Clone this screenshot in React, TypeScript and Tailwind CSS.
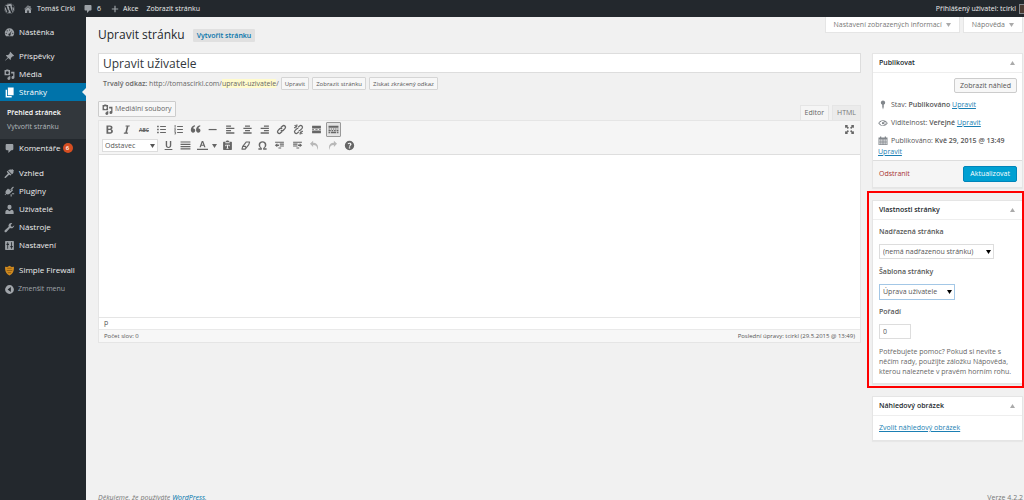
import type { ReactNode } from 'react'
import { FaWordpress } from 'react-icons/fa'

interface IconProps {
  className?: string
  children?: ReactNode
}

// All glyphs are drawn on a 20x20 grid
function Icon({ className = 'size-[11px]', children }: IconProps) {
  return (
    <svg viewBox="0 0 20 20" fill="currentColor" aria-hidden="true" className={`shrink-0 ${className}`}>
      {children}
    </svg>
  )
}

const glyphs = {
  home: <path d="M16 8.5l1.5 1.5-1 1L10 4.6 3.500 11l-1-1L10 2.500l3 3V4h2v3.500zM10 6l6 5.500V18h-4.500v-5h-3v5H4v-6.500z" />,
  comment: <path d="M5 2h10c1.100 0 2 .9 2 2v7c0 1.100-.9 2-2 2h-2l-5 5v-5H5c-1.100 0-2-.9-2-2V4c0-1.100.9-2 2-2z" />,
  plus: <path d="M8.500 2h3v6.500H18v3h-6.500V18h-3v-6.500H2v-3h6.500z" />,
  dashboard: (
    <path
      fillRule="evenodd"
      d="M3.800 17h12.400A8.600 8.600 0 1 0 3.800 17zM10 4.500a1 1 0 1 1 0 2 1 1 0 0 1 0-2zM5.800 6a1 1 0 1 1 0 2 1 1 0 0 1 0-2zM14.500 6.500l-2.800 6.400a2 2 0 1 1-1.500-.9zM4 10.500a1 1 0 1 1 0 2 1 1 0 0 1 0-2zM16 10.500a1 1 0 1 1 0 2 1 1 0 0 1 0-2z"
    />
  ),
  post: <path d="M10.400 3l1-1.500L18.500 8.600 17 9.600l-1.200-.2-3.300 3.300c.3 1.500.1 2.900-.8 3.800L8 12.900 2.600 17.400c-.6.5-1 .3-.5-.4L6.900 11.800 3.400 8.300c.9-.9 2.300-1.100 3.800-.8l3.300-3.300z" />,
  media: (
    <path
      fillRule="evenodd"
      d="M1 2h2.500l1-1h3l1 1H11v9.500H1zM6 4a2.700 2.700 0 1 0 0 5.400A2.700 2.700 0 0 0 6 4zM13 5h6v10.500a2.700 2.700 0 1 1-2.300-2.600V8H13zM8.500 13h3v4a2.700 2.700 0 1 1-3-2.500z"
    />
  ),
  page: <path d="M7 1h10.500v14H7zM3 5h2.500v11.500H14V19H3z" />,
  appearance: <path d="M14.500 11.500L7.300 4.200c2-1.200 4-2.200 6.200-1.200l1.300-1.300 3.500 3.500L17 6.500c.9 2-.5 3.500-2.500 5zM6.500 5.200l7 7-1.500 1.500-2.700-1.600L3 18c-1 .9-2.700-.8-1.800-1.800l6-6.200L5 6.700z" />,
  plugin: <path d="M13 4.200l3.100-2.800c1-.8 2.300.5 1.500 1.500L14.800 6l1.700 1.700-6.800 6.800c-1.900 1.200-4 .9-5.300 0L2 17l-.9-.9 2.400-2.400c-1-1.500-1.100-3.500 0-5.200l3.800-3.800 2.300 2.300 1.500-1.500 1.200 1.200-1.500 1.500 1 1 1.500-1.500zM14.500 13h4v2h-4zM12 15h2v4h-2z" />,
  users: <path d="M10 1.500a3.800 3.800 0 0 1 3.700 4c0 2.500-1.500 4.500-3.700 4.500S6.300 8 6.300 5.500a3.800 3.800 0 0 1 3.700-4zM6.500 10.500L10 13l3.500-2.500c2.800.3 4 2 4 4V18h-15v-3.500c0-2 1.200-3.700 4-4z" />,
  tools: <path d="M16.700 9.800a5 5 0 0 1-5.800 1.200L4.500 18c-1 1-2.500.9-3.200 0-.7-.8-.6-2 .2-2.800l7-6.400a5 5 0 0 1 6.600-6.500l-2.900 3 .6 2.900 2.900.6 3-3a5 5 0 0 1-2 4z" />,
  settings: (
    <path
      fillRule="evenodd"
      d="M3 2h14a1 1 0 0 1 1 1v14a1 1 0 0 1-1 1H3a1 1 0 0 1-1-1V3a1 1 0 0 1 1-1zM6 4v3H4.500v2H6v7h1.500V9H9V7H7.500V4zM13 4v7h-1.500v2H13v3h1.500v-3H16v-2h-1.500V4z"
    />
  ),
  collapse: <path fillRule="evenodd" d="M10 2a8 8 0 1 0 0 16 8 8 0 0 0 0-16zM12.500 5.500v9L6.500 10z" />,
  pin: <path d="M10 1a4.500 4.500 0 0 1 1.500 8.700V14L10 19l-1.500-5V9.700A4.500 4.500 0 0 1 10 1z" />,
  eye: (
    <path
      fillRule="evenodd"
      d="M10 4.500c4.200 0 7.500 2.300 9.500 5.800-2 3.200-5.300 5.200-9.500 5.200S2.500 13.500.5 10.300C2.500 6.800 5.800 4.500 10 4.500zM10 6a4.300 4.300 0 1 0 0 8.500A4.300 4.300 0 0 0 10 6zM2.500 10.200c.7 1 2 2.200 3.200 2.900-.8-2-.8-3.800.2-5.500-1.300.6-2.500 1.600-3.400 2.600zM17.500 10.200c-.7 1-2 2.200-3.200 2.900.8-2 .8-3.800-.2-5.500 1.300.6 2.500 1.600 3.400 2.600zM10 8a2.200 2.200 0 1 1 0 4.500A2.200 2.200 0 0 1 10 8z"
    />
  ),
  calendar: (
    <path
      fillRule="evenodd"
      d="M4 1h2.500v2h7V1H16v2h3v15H1V3h3zM2.500 7v2.500H5V7zM6.500 7v2.500H9V7zM11 7v2.500h2.500V7zM15 7v2.500h2.500V7zM2.500 11v2H5v-2zM6.500 11v2H9v-2zM11 11v2h2.500v-2zM15 11v2h2.500v-2zM2.500 14.500v2H5v-2zM6.500 14.500v2H9v-2zM11 14.500v2h2.500v-2zM15 14.500v2h2.500v-2z"
    />
  ),
  bold: <path fillRule="evenodd" d="M4.500 2.500h6.300c3 0 4.700 1.300 4.700 3.700 0 1.700-.8 2.900-2.300 3.300 1.900.4 3 1.700 3 3.700 0 2.700-2 4.300-5.200 4.300H4.500zM7.700 5v3.500h2.600c1.300 0 2-.6 2-1.800S11.600 5 10.300 5zM7.700 10.900V15h3c1.500 0 2.200-.7 2.200-2s-.8-2.100-2.300-2.100z" />,
  italic: <path d="M8.500 2.500H16l-.4 2h-2.200l-2.600 11H13l-.4 2H5l.4-2h2.400l2.600-11H8.100z" />,
  ul: <path d="M2 3h3v3H2zM7.500 3.700H18v1.600H7.500zM2 8.500h3v3H2zM7.500 9.200H18v1.600H7.500zM2 14h3v3H2zM7.500 14.700H18v1.600H7.500z" />,
  ol: <path d="M3 2h1.600v5H3zM7.500 3.700H18v1.600H7.500zM2 8h3.500v1.300L4 11h1.500v1H2v-1.200L3.800 9H2zM7.500 9.200H18v1.600H7.500zM2 13.500h3.500v5H2v-1h2.200v-1H2.500v-1h1.700v-1H2zM7.500 14.700H18v1.600H7.500z" />,
  quote: <path d="M9.300 4.300C6.800 5.200 5.900 6.700 5.900 8.300c2.100-.2 3.600 1.300 3.600 3.500S8 15.700 5.600 15.700C3 15.700 1.500 13.500 1.500 10.500c0-4.300 3-7.500 7.500-8.300zM18.800 4.300c-2.500.9-3.400 2.400-3.400 4 2.100-.2 3.600 1.300 3.600 3.500s-1.500 3.900-3.900 3.900c-2.600 0-4.100-2.200-4.100-5.200 0-4.300 3-7.500 7.500-8.300z" />,
  hr: <path d="M3 9h14.500v2.200H3z" />,
  left: <path d="M2 2.500h9v2.300H2zM2 6.700h15v2.300H2zM2 11h9v2.300H2zM2 15.200h15v2.300H2z" />,
  center: <path d="M5.500 2.500h9v2.300h-9zM2.500 6.700h15v2.300h-15zM5.500 11h9v2.300h-9zM2.500 15.200h15v2.300h-15z" />,
  right: <path d="M9 2.500h9v2.300H9zM3 6.700h15v2.300H3zM9 11h9v2.300H9zM3 15.200h15v2.300H3z" />,
  link: (
    <g fill="none" stroke="currentColor" strokeWidth="2.4">
      <path d="M9 6.500L12 3.500a3.200 3.200 0 0 1 4.500 4.500l-3.200 3.200a3.200 3.200 0 0 1-4.500 0" />
      <path d="M11 13.500l-3 3A3.200 3.200 0 0 1 3.500 12l3.200-3.200a3.200 3.200 0 0 1 4.500 0" />
    </g>
  ),
  unlink: (
    <g fill="none" stroke="currentColor" strokeWidth="2.2">
      <path d="M9.500 6L12 3.500a3.200 3.200 0 0 1 4.500 4.500l-3.200 3.200a3.200 3.200 0 0 1-3 .8" />
      <path d="M10.500 14L8 16.500A3.200 3.200 0 0 1 3.500 12l3.200-3.200a3.200 3.200 0 0 1 3-.8" />
      <path d="M3 2l4 4M2 6.500h3M7 1v3M17 18l-4-4M18 13.500h-3M13 19v-3" />
    </g>
  ),
  more: <path d="M2 3h16v5H2zM2 9.400h3.500v1.300H2zM8 9.400h4v1.300H8zM14.500 9.400H18v1.300h-3.500zM2 12h16v5H2z" />,
  kitchen: <path d="M1 3h18v4H1zM1 8h2.500v2H1zM5 8h2.500v2H5zM9 8h2.500v2H9zM13 8h2.500v2H13zM17 8h2v2h-2zM1 11h4v2H1zM6.500 11h3v2h-3zM11 11h3v2h-3zM15.500 11H19v2h-3.500zM1 14h2.500v3H1zM5 14h10v3H5zM16.500 14H19v3h-2.500z" />,
  expand: (
    <path d="M2 2h5.500L5.800 3.800 9 7 7 9 3.800 5.800 2 7.500zM18 2v5.500l-1.800-1.700L13 9l-2-2 3.200-3.200L12.500 2zM2 18v-5.500l1.800 1.700L7 11l2 2-3.200 3.200L7.500 18zM18 18h-5.500l1.700-1.800L11 13l2-2 3.200 3.200 1.800-1.700z" />
  ),
  underline: <path d="M5 2h2.500v7.500c0 2 .9 3 2.500 3s2.500-1 2.500-3V2H15v7.700c0 3.200-1.900 5-5 5s-5-1.800-5-5zM3 16.500h14V18H3z" />,
  justify: <path d="M1 2.500h18v2.200H1zM1 6.700h18v2.200H1zM1 11h18v2.200H1zM1 15.200h18v2.200H1z" />,
  color: <path fillRule="evenodd" d="M8.700 2h2.600L15.500 13h-2.600l-.8-2.500H7.900L7.100 13H4.500zM10 4.500L8.600 8.700h2.800zM0 16h20v2H0z" />,
  paste: <path fillRule="evenodd" d="M7 3c.3-1.200 1.500-2 3-2s2.700.8 3 2h4a1 1 0 0 1 1 1v13a1 1 0 0 1-1 1H3a1 1 0 0 1-1-1V4a1 1 0 0 1 1-1zM6 4v2h8V4zM6 8.500v2.700h1l.5-1.200H9v5H7.800v1h4.400v-1H11v-5h1.500l.5 1.200h1V8.500z" />,
  eraser: (
    <g fill="none" stroke="currentColor" strokeWidth="2" strokeLinejoin="round">
      <path d="M11.500 3.500h6l-1.500 5-6.500 8h-6l1.500-5z" />
      <path d="M5 11.500h5l1 3" />
    </g>
  ),
  omega: <path d="M2.500 15h4.200C4.200 13.400 3 11.300 3 8.700 3 5 5.800 2.300 10 2.300S17 5 17 8.700c0 2.600-1.200 4.700-3.700 6.300h4.200v2.500h-6.300v-2.900c2-1 3-3 3-5.700 0-2.800-1.700-4.500-4.200-4.500S5.800 6.100 5.800 8.900c0 2.700 1 4.700 3 5.700v2.900H2.500z" />,
  outdent: <path d="M2 3h16v2H2zM10.500 6.500H18v2h-7.500zM10.500 10H18v2h-7.500zM8 13.500h5v2H8zM6 6v2.300h3v2.400H6V13L1.500 9.500z" />,
  indent: <path d="M2 3h16v2H2zM2 6.500h8v2H2zM2 10h8v2H2zM8 13.500h5v2H8zM14 6v2.300h-3v2.400h3V13l4.500-3.500z" />,
  undo: <path d="M7.500 1.500v3.300c5.500 0 9 3 9 8.700 0 1.600-.4 3.200-1.100 4.500.1-5.500-2.400-8.700-7.900-8.700v3.500L1.800 7z" />,
  redo: <path d="M12.500 1.500v3.300c-5.500 0-9 3-9 8.700 0 1.600.4 3.200 1.100 4.500-.1-5.500 2.400-8.700 7.900-8.700v3.500L18.200 7z" />,
  help: (
    <path
      fillRule="evenodd"
      d="M10 1.500a8.500 8.500 0 1 0 0 17 8.500 8.500 0 0 0 0-17zM8.900 11.700c0-1.700 2.200-2.200 2.200-3.600 0-.7-.5-1.100-1.300-1.100-.9 0-1.600.4-2.200.9L6.500 6.100a5.200 5.200 0 0 1 3.500-1.300c2.200 0 3.700 1.200 3.700 3 0 2.300-2.600 2.700-2.600 4.300zM8.800 13.300h2.400v2.200H8.800z"
    />
  )
}

type Glyph = keyof typeof glyphs

const menu: { items: { label: string; icon: Glyph; badge?: number }[]; className: string }[] = [
  { items: [{ label: 'Nástěnka', icon: 'dashboard' }], className: 'mt-1.5' },
  { items: [{ label: 'Příspěvky', icon: 'post' }, { label: 'Média', icon: 'media' }], className: 'mt-1.5' },
  { items: [{ label: 'Stránky', icon: 'page' }], className: '' },
  { items: [{ label: 'Komentáře', icon: 'comment', badge: 6 }], className: '' },
  {
    items: [
      { label: 'Vzhled', icon: 'appearance' },
      { label: 'Pluginy', icon: 'plugin' },
      { label: 'Uživatelé', icon: 'users' },
      { label: 'Nástroje', icon: 'tools' },
      { label: 'Nastavení', icon: 'settings' }
    ],
    className: 'mt-[7px]'
  }
]

const firstRow: { label: string; icon: Glyph | 'strike' }[] = [
  { label: 'Tučné', icon: 'bold' },
  { label: 'Kurzíva', icon: 'italic' },
  { label: 'Přeškrtnuté', icon: 'strike' },
  { label: 'Odrážky', icon: 'ul' },
  { label: 'Číslování', icon: 'ol' },
  { label: 'Citace', icon: 'quote' },
  { label: 'Vodorovná čára', icon: 'hr' },
  { label: 'Zarovnat vlevo', icon: 'left' },
  { label: 'Zarovnat na střed', icon: 'center' },
  { label: 'Zarovnat vpravo', icon: 'right' },
  { label: 'Vložit odkaz', icon: 'link' },
  { label: 'Odstranit odkaz', icon: 'unlink' },
  { label: 'Číst dále', icon: 'more' },
  { label: 'Lišta nástrojů', icon: 'kitchen' }
]

const secondRow: { label: string; icon: Glyph }[] = [
  { label: 'Podtržené', icon: 'underline' },
  { label: 'Do bloku', icon: 'justify' },
  { label: 'Barva textu', icon: 'color' },
  { label: 'Vložit jako text', icon: 'paste' },
  { label: 'Vymazat formát', icon: 'eraser' },
  { label: 'Speciální znaky', icon: 'omega' },
  { label: 'Zmenšit odsazení', icon: 'outdent' },
  { label: 'Zvětšit odsazení', icon: 'indent' },
  { label: 'Zpět', icon: 'undo' },
  { label: 'Znovu', icon: 'redo' },
  { label: 'Nápověda', icon: 'help' }
]

function Caret({ up = false, className = '' }: { up?: boolean; className?: string }) {
  return (
    <svg viewBox="0 0 10 8" fill="currentColor" aria-hidden="true" className={`h-1 w-[5px] shrink-0 ${className}`}>
      <path d={up ? 'M5 0l5 8H0z' : 'M0 0h10L5 8z'} />
    </svg>
  )
}

function AdminBar() {
  return (
    <header className="flex h-[17px] shrink-0 items-center bg-[#23282d] pl-1 text-[#eee]">
      <a href="#wp" aria-label="WordPress" className="text-[#9ca1a6]">
        <FaWordpress className="size-[11px]" />
      </a>
      <a href="#site" className="ml-2 flex items-center gap-1">
        <Icon className="size-[10px] text-[#9ca1a6]">{glyphs.home}</Icon>
        Tomáš Cirkl
      </a>
      <a href="#comments" className="ml-2 flex items-center gap-1">
        <Icon className="size-[10px] text-[#9ca1a6]">{glyphs.comment}</Icon>
        6
      </a>
      <a href="#new" className="ml-2.5 flex items-center gap-1">
        <Icon className="size-2 text-[#9ca1a6]">{glyphs.plus}</Icon>
        Akce
      </a>
      <a href="#view" className="ml-2">
        Zobrazit stránku
      </a>
      <a href="#profile" className="ml-auto flex items-center gap-[3px]">
        Přihlášený uživatel: tcirkl
        <span className="h-[10px] w-[5px] border border-r-0 border-[#82878c] bg-[#4b3a32]" />
      </a>
    </header>
  )
}

function Sidebar() {
  return (
    <nav className="w-[86px] shrink-0 bg-[#23282d] text-[#eee]">
      {menu.map((group) => (
        <div key={group.items[0].label} className={group.className}>
          {group.items.map((item) => {
            const active = item.label === 'Stránky'
            return (
              <div key={item.label}>
                <a
                  href="#menu"
                  className={`relative flex h-[18px] items-center gap-1 pl-1 text-[8px] ${active ? 'bg-[#0073aa] text-white' : ''}`}
                >
                  <Icon className={`size-[11px] ${active ? 'text-white' : 'text-[#9ca1a6]'}`}>{glyphs[item.icon]}</Icon>
                  {item.label}
                  {item.badge && (
                    <span className="-ml-0.5 flex size-[10px] items-center justify-center rounded-full bg-[#d54e21] text-[6px] font-semibold text-white">
                      {item.badge}
                    </span>
                  )}
                  {active && (
                    <svg viewBox="0 0 4 8" aria-hidden="true" className="absolute right-0 h-2 w-1 text-[#f1f1f1]">
                      <path d="M4 0v8L0 4z" fill="currentColor" />
                    </svg>
                  )}
                </a>
                {active && (
                  <div className="flex h-[38px] flex-col gap-1 bg-[#32373c] pt-[7px] pl-[7px]">
                    <a href="#all" className="font-semibold text-white">
                      Přehled stránek
                    </a>
                    <a href="#add" className="text-[#b4b9be]">
                      Vytvořit stránku
                    </a>
                  </div>
                )}
              </div>
            )
          })}
        </div>
      ))}
      <a href="#firewall" className="mt-[7px] flex h-[18px] items-center gap-1 pl-1 text-[8px]">
        <Icon className="size-[11px]">
          <path d="M2 3l4 .500L10 1.500l4 2 4-.5c.5 7-1.500 13-8 16C3.500 16 1.500 10 2 3z" fill="#d08a1f" />
          <path d="M6 6h8M5 10h10M7 14h6" stroke="#8a5a14" strokeWidth="1.500" />
        </Icon>
        Simple Firewall
      </a>
      <button type="button" className="flex h-5 w-full items-center gap-[3px] pl-1 text-[#a0a5aa]">
        <Icon>{glyphs.collapse}</Icon>
        Zmenšit menu
      </button>
    </nav>
  )
}

function SmallButton({ children }: { children: ReactNode }) {
  return (
    <button type="button" className="h-[13px] rounded-[1px] border border-[#d5d5d5] bg-[#f7f7f7] px-[3px] text-[6px] text-[#555]">
      {children}
    </button>
  )
}

function ToolButton({ label, icon }: { label: string; icon: Glyph | 'strike' }) {
  const pressed = icon === 'kitchen'
  const faded = icon === 'undo' || icon === 'redo'
  return (
    <button
      type="button"
      aria-label={label}
      className={`flex h-[15px] items-center justify-center gap-1 ${icon === 'color' ? 'w-[22px]' : 'w-[15px]'} ${
        pressed ? 'rounded-[1px] border border-[#999] bg-[#e4e4e4]' : ''
      } ${faded ? 'text-[#b8b8b8]' : 'text-[#666]'}`}
    >
      {icon === 'strike' ? (
        <span className="text-[5px] font-bold line-through">ABC</span>
      ) : (
        <Icon className="size-[11px]">{glyphs[icon]}</Icon>
      )}
      {icon === 'color' && <Caret />}
    </button>
  )
}

function Editor() {
  return (
    <section className="mt-[11px]">
      <div className="flex items-end justify-between">
        <button
          type="button"
          className="mb-[3px] flex h-4 items-center gap-0.5 rounded-[1px] border border-[#ccc] bg-[#f7f7f7] px-[3px] text-[#666]"
        >
          <Icon className="size-[11px]">{glyphs.media}</Icon>
          Mediální soubory
        </button>
        <div className="flex gap-[3px] text-[#666]">
          <button type="button" className="h-[15px] border border-b-0 border-[#e5e5e5] bg-[#f5f5f5] px-1">
            Editor
          </button>
          <button type="button" className="h-[15px] border border-b-0 border-[#e5e5e5] bg-[#ebebeb] px-1 text-[#777]">
            HTML
          </button>
        </div>
      </div>
      <div className="border border-[#e5e5e5] bg-white">
        <div className="border-b border-[#dedede] bg-[#f5f5f5] px-[3px] py-px">
          <div className="flex items-center justify-between">
            <div className="flex w-[239px] justify-between">
              {firstRow.map((tool) => (
                <ToolButton key={tool.label} {...tool} />
              ))}
            </div>
            <ToolButton label="Celá obrazovka" icon="expand" />
          </div>
          <div className="mt-px flex items-center gap-[3px]">
            <div className="relative flex items-center">
              <select aria-label="Formát" className="h-[13px] w-[56px] appearance-none border border-[#ddd] bg-white px-0.5 text-[#555]">
                <option>Odstavec</option>
              </select>
              <Caret className="pointer-events-none absolute right-[3px] text-[#555]" />
            </div>
            <div className="flex w-[196px] justify-between">
              {secondRow.map((tool) => (
                <ToolButton key={tool.label} {...tool} />
              ))}
            </div>
          </div>
        </div>
        <textarea aria-label="Obsah stránky" className="block h-[162px] w-full resize-none p-1 outline-none" />
        <div className="h-3 border-t border-[#e5e5e5] px-[5px] text-[#555]">p</div>
        <div className="flex h-[13px] items-center justify-between border-t border-[#e9e9e9] bg-[#f7f7f7] px-[5px] text-[6px] text-[#555]">
          <span>Počet slov: 0</span>
          <span>Poslední úpravy: tcirkl (29.5.2015 @ 13:49)</span>
        </div>
      </div>
    </section>
  )
}

function Postbox({ title, children }: { title: string; children: ReactNode }) {
  return (
    <section className="border border-[#e5e5e5] bg-white shadow-[0_1px_1px_rgba(0,0,0,0.04)]">
      <h2 className="flex h-[19px] items-center justify-between border-b border-[#eee] pr-[7px] pl-1.5 font-semibold text-[#23282d]">
        {title}
        <Caret up className="text-[#aaa]" />
      </h2>
      {children}
    </section>
  )
}

function EditLink() {
  return (
    <a href="#edit" className="text-[#1b7fb3] underline">
      Upravit
    </a>
  )
}

function PublishBox() {
  return (
    <Postbox title="Publikovat">
      <div className="px-[5px] pt-[5px]">
        <button type="button" className="ml-auto block h-[15px] rounded-[2px] border border-[#ccc] bg-[#f7f7f7] px-[5px] text-[#555]">
          Zobrazit náhled
        </button>
        <div className="mt-[5px] flex h-[13px] items-center">
          <Icon className="mr-[3px] size-[10px] text-[#82878c]">{glyphs.pin}</Icon>
          <p>
            Stav: <b className="font-semibold">Publikováno</b> <EditLink />
          </p>
        </div>
        <div className="mt-[5px] flex h-[13px] items-center">
          <Icon className="mr-[3px] size-[10px] text-[#82878c]">{glyphs.eye}</Icon>
          <p>
            Viditelnost: <b className="font-semibold">Veřejné</b> <EditLink />
          </p>
        </div>
        <div className="mt-[5px] flex h-[13px] items-center">
          <Icon className="mr-[3px] size-[10px] text-[#82878c]">{glyphs.calendar}</Icon>
          <p className="whitespace-nowrap">
            Publikováno: <b className="font-semibold">Kvě 29, 2015 @ 13:49</b>
          </p>
        </div>
        <EditLink />
      </div>
      <div className="mt-[3px] flex h-[27px] items-center justify-between border-t border-[#ddd] bg-[#f5f5f5] pr-[5px] pl-1.5">
        <a href="#delete" className="text-[#a83232]">
          Odstranit
        </a>
        <button type="submit" className="h-4 rounded-[2px] border border-[#0085ba] bg-[#00a0d2] px-1.5 text-white">
          Aktualizovat
        </button>
      </div>
    </Postbox>
  )
}

function PageAttributes() {
  return (
    <div className="relative mt-3">
      <Postbox title="Vlastnosti stránky">
        <div className="flex flex-col items-start px-1.5 pt-[7px] pb-1.5">
          <label htmlFor="parent" className="font-semibold">
            Nadřazená stránka
          </label>
          <div className="relative mt-[7px] flex items-center">
            <select id="parent" className="h-[15px] w-[115px] appearance-none border border-[#ddd] bg-white pl-[3px]">
              <option>(nemá nadřazenou stránku)</option>
            </select>
            <Caret className="pointer-events-none absolute right-[3px] text-black" />
          </div>
          <label htmlFor="template" className="mt-2 font-semibold">
            Šablona stránky
          </label>
          <div className="relative mt-[7px] flex items-center">
            <select id="template" className="h-4 w-[76px] appearance-none border border-[#a3c7e6] bg-white pl-[3px]">
              <option>Úprava uživatele</option>
            </select>
            <Caret className="pointer-events-none absolute right-[3px] text-black" />
          </div>
          <label htmlFor="order" className="mt-[7px] font-semibold">
            Pořadí
          </label>
          <input id="order" defaultValue="0" className="mt-[7px] h-[15px] w-8 border border-[#ddd] bg-white px-[3px]" />
          <p className="mt-2 text-[#666]">
            Potřebujete pomoc? Pokud si nevíte s něčím rady, použijte záložku Nápověda, kterou naleznete v pravém horním
            rohu.
          </p>
        </div>
      </Postbox>
      <div className="pointer-events-none absolute -top-[9px] -right-px -bottom-1 -left-[5px] border-2 border-[#ff0000]" />
    </div>
  )
}

export default function App() {
  return (
    <div className="flex h-screen flex-col overflow-hidden bg-[#f1f1f1] font-['Open_Sans','Noto_Sans',sans-serif] text-[7px] leading-[10px] text-[#555]">
      <AdminBar />
      <div className="flex min-h-0 flex-1">
        <Sidebar />
        <main className="min-w-0 flex-1 pr-px pl-3">
          <div className="flex items-start justify-between">
            <h1 className="mt-2.5 flex items-center gap-2 text-[12px] leading-4 text-[#23282d]">
              Upravit stránku
              <a href="#add" className="rounded-[1px] bg-[#e0e0e0] px-1 text-[7px] leading-[13px] font-semibold text-[#0073aa]">
                Vytvořit stránku
              </a>
            </h1>
            <div className="flex gap-[3px] text-[#777]">
              <button type="button" className="flex h-4 items-center gap-1 border border-t-0 border-[#e5e5e5] bg-white px-2">
                Nastavení zobrazených informací
                <Caret className="text-[#aaa]" />
              </button>
              <button type="button" className="flex h-4 items-center gap-1 border border-t-0 border-[#e5e5e5] bg-white px-2">
                Nápověda
                <Caret className="text-[#aaa]" />
              </button>
            </div>
          </div>
          <form className="mt-2.5 flex items-start gap-[11px]" onSubmit={(event) => event.preventDefault()}>
            <div className="min-w-0 flex-1">
              <input
                aria-label="Název"
                defaultValue="Upravit uživatele"
                className="block h-5 w-full border border-[#ddd] bg-white px-1 text-[12px] text-[#32373c]"
              />
              <div className="mt-1 flex items-center gap-0.5 pl-[5px]">
                <p className="text-[#666]">
                  <b className="font-semibold">Trvalý odkaz:</b> http://tomascirkl.com/
                  <span className="bg-[#fffbcc]">upravit-uzivatele</span>/
                </p>
                <div className="flex gap-[3px]">
                  <SmallButton>Upravit</SmallButton>
                  <SmallButton>Zobrazit stránku</SmallButton>
                  <SmallButton>Získat zkrácený odkaz</SmallButton>
                </div>
              </div>
              <Editor />
            </div>
            <aside className="w-[151px] shrink-0">
              <PublishBox />
              <PageAttributes />
              <div className="mt-3">
                <Postbox title="Náhledový obrázek">
                  <p className="px-1.5 py-[7px]">
                    <a href="#image" className="text-[#1b7fb3] underline">
                      Zvolit náhledový obrázek
                    </a>
                  </p>
                </Postbox>
              </div>
            </aside>
          </form>
          <footer className="mt-[52px] flex justify-between text-[#777]">
            <p className="italic">
              Děkujeme, že používáte{' '}
              <a href="#wordpress" className="text-[#0073aa]">
                WordPress
              </a>
              .
            </p>
            <p>Verze 4.2.2</p>
          </footer>
        </main>
      </div>
    </div>
  )
}
